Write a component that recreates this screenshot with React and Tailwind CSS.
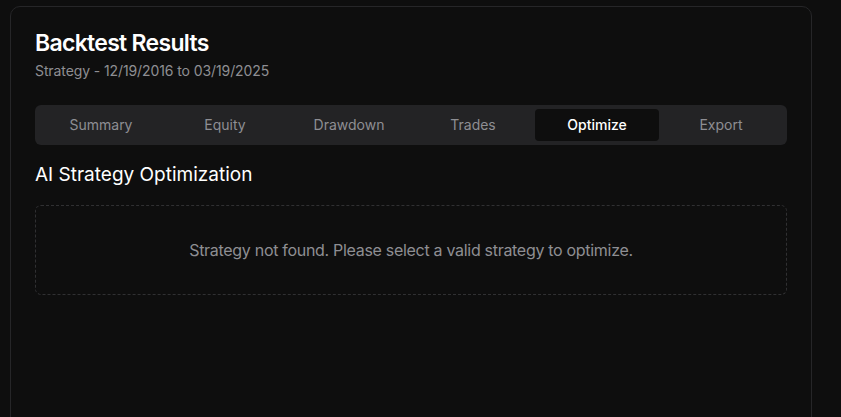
import React, { useState } from 'react';

const tabs = ['Summary', 'Equity', 'Drawdown', 'Trades', 'Optimize', 'Export'];

export default function App() {
  const [active, setActive] = useState('Optimize');

  return (
    <div
      className="min-h-screen w-full bg-[#0e0e0e] pl-[10px] pt-[6px] overflow-hidden"
      style={{ fontFamily: 'Inter, "Noto Sans", sans-serif' }}
    >
      <div className="w-[802px] h-[440px] rounded-[10px] border border-[#262628] bg-[#0e0e0e]">
        <div className="flex flex-col gap-1.5 p-6">
          <h1 className="h-6 text-[23px] font-semibold leading-6 tracking-[-0.7px] text-white">Backtest Results</h1>
          <p className="text-sm tracking-[-0.1px] text-[#8e8e93]">Strategy - 12/19/2016 to 03/19/2025</p>
        </div>

        <div className="px-6 pb-6">
          <div className="grid h-10 w-full grid-cols-6 items-center rounded-md bg-[#232325] p-1">
            {tabs.map(tab => (
              <button
                key={tab}
                onClick={() => setActive(tab)}
                className={
                  active === tab
                    ? 'h-8 rounded-[4px] bg-[#0e0e0e] text-sm font-medium text-white'
                    : 'h-8 rounded-[4px] text-sm font-normal text-[#8e8e93]'
                }
              >
                {tab}
              </button>
            ))}
          </div>

          <div className="mt-4">
            <h2 className="mb-4 text-[19px] leading-7 font-normal text-white">AI Strategy Optimization</h2>
            <div className="rounded-md border border-dashed border-[#303032] p-8 text-center">
              <p className="text-base tracking-[-0.3px] text-[#8e8e93]">
                Strategy not found. Please select a valid strategy to optimize.
              </p>
            </div>
          </div>
        </div>
      </div>
    </div>
  );
}
